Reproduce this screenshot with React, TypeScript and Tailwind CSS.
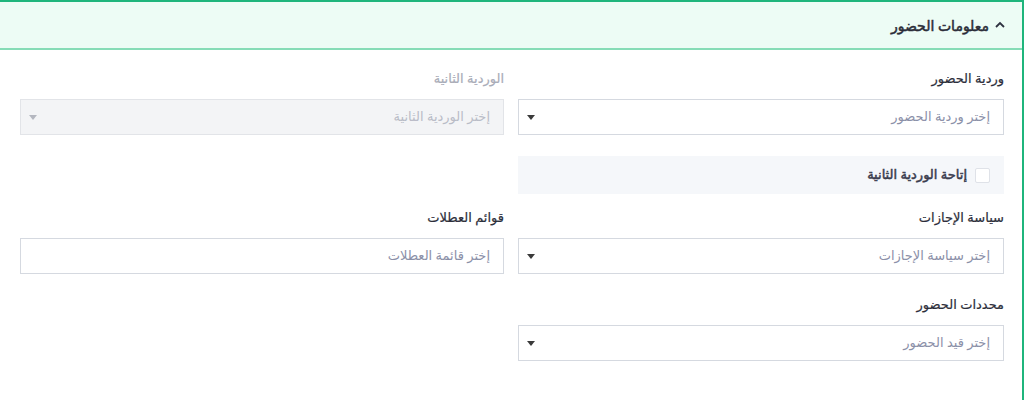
import React from "react";

const font = { fontFamily: '"Noto Sans", "DejaVu Sans", sans-serif' };

function Caret({ muted }: { muted?: boolean }) {
  return (
    <svg width="8" height="5" viewBox="0 0 8 5" className="shrink-0">
      <path d="M0 0h8L4 5z" fill={muted ? "#b4b7c0" : "#3a3a3a"} />
    </svg>
  );
}

function Field({
  label,
  placeholder,
  disabled,
  caret = true,
}: {
  label: string;
  placeholder: string;
  disabled?: boolean;
  caret?: boolean;
}) {
  return (
    <div>
      <div
        className={`h-[20px] text-[13px] leading-[20px] mb-[11px] [-webkit-text-stroke:0.2px] ${
          disabled ? "text-[#a9acb8]" : "text-[#2c2e3a]"
        }`}
      >
        {label}
      </div>
      <div
        className={`flex h-[36px] items-center justify-between border pr-[13px] pl-[8px] ${
          disabled
            ? "border-[#e2e4e8] bg-[#f3f4f6]"
            : "border-[#d5d9e0] bg-white"
        }`}
      >
        <span
          className={`text-[13px] ${
            disabled ? "text-[#b9bcc7]" : "text-[#8b90a8]"
          }`}
        >
          {placeholder}
        </span>
        {caret && <Caret muted={disabled} />}
      </div>
    </div>
  );
}

export default function App() {
  return (
    <div dir="rtl" style={font} className="h-[400px] w-[1024px] bg-white overflow-hidden">
      <div className="h-full border-r-2 border-[#1fb57c] bg-white">
        {/* section header */}
        <div className="flex h-[50px] items-center gap-[6px] border-t-2 border-b-2 border-t-[#1fb57c] border-b-[#86dcb6] bg-[#edfcf5] pr-[17px]">
          <svg width="10" height="7" viewBox="0 0 10 7" className="mt-[-2px]">
            <path d="M1 6l4-4 4 4" fill="none" stroke="#2e3140" strokeWidth="1.8" />
          </svg>
          <span className="text-[14px] text-[#2a2c38] [-webkit-text-stroke:0.5px]">
            معلومات الحضور
          </span>
        </div>

        <div className="grid grid-cols-[486px_484px] gap-x-[14px] pr-[18px] pt-[18px]">
          <Field label="وردية الحضور" placeholder="إختر وردية الحضور" />
          <Field label="الوردية الثانية" placeholder="إختر الوردية الثانية" disabled />

          <div className="mt-[21px] flex h-[38px] items-center gap-[8px] bg-[#f5f7fa] pr-[14px]">
            <span className="h-[15px] w-[15px] border border-[#dfe2e8] bg-white rounded-[2px]" />
            <span className="text-[13px] text-[#3a3c4e] [-webkit-text-stroke:0.5px]">
              إتاحة الوردية الثانية
            </span>
          </div>
          <div />

          <div className="mt-[13px]">
            <Field label="سياسة الإجازات" placeholder="إختر سياسة الإجازات" />
          </div>
          <div className="mt-[13px]">
            <Field label="قوائم العطلات" placeholder="إختر قائمة العطلات" caret={false} />
          </div>

          <div className="mt-[20px]">
            <Field label="محددات الحضور" placeholder="إختر قيد الحضور" />
          </div>
          <div />
        </div>
      </div>
    </div>
  );
}
